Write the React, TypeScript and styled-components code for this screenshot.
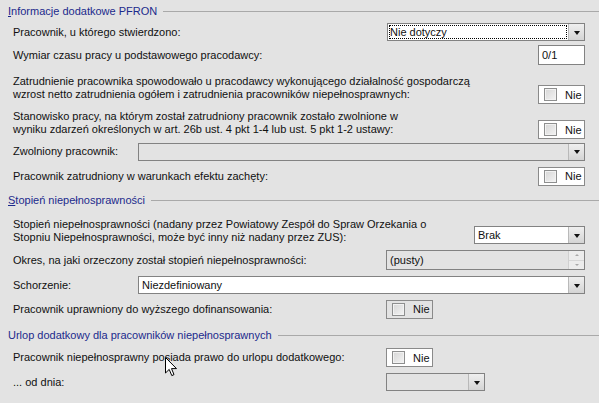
import styled, { createGlobalStyle, css } from "styled-components";

const GlobalStyle = createGlobalStyle`
  html, body {
    margin: 0;
    padding: 0;
    background: #e3e3e3;
  }
  body {
    font-family: "Liberation Sans", Arial, sans-serif;
    font-size: 11px;
    color: #101010;
  }
`;

const Panel = styled.div`
  position: relative;
  width: 599px;
  height: 403px;
  overflow: hidden;
  background: #e3e3e3;
`;

const GroupHeader = styled.div<{ $h: number }>`
  display: flex;
  align-items: center;
  height: ${(p) => p.$h}px;
  padding-left: 8px;
  color: #1c2a8c;

  &::after {
    content: "";
    flex: 1;
    margin-left: 6px;
    border-top: 1px solid #a9a9a9;
  }
`;

const Key = styled.span`
  text-decoration: underline;
`;

const GroupBody = styled.div`
  padding: 0 14px 0 13px;
`;

const Row = styled.div<{ $h: number; $bottom?: boolean }>`
  display: flex;
  align-items: ${(p) => (p.$bottom ? "flex-end" : "center")};
  height: ${(p) => p.$h}px;
`;

const Label = styled.div<{ $w?: number; $mb?: number }>`
  ${(p) => (p.$w ? css`width: ${p.$w}px; flex: none;` : css`flex: 1;`)}
  line-height: 13px;
  margin-bottom: ${(p) => p.$mb ?? 0}px;
  white-space: nowrap;
`;

const Box = styled.div<{ $w?: number; $h: number; $disabled?: boolean }>`
  display: flex;
  align-items: stretch;
  box-sizing: border-box;
  ${(p) => (p.$w ? css`width: ${p.$w}px; flex: none;` : css`flex: 1;`)}
  height: ${(p) => p.$h}px;
  border: 1px solid #828282;
  background: ${(p) => (p.$disabled ? "#e3e3e3" : "#ffffff")};
`;

const ComboText = styled.div<{ $focus?: boolean }>`
  flex: 1;
  display: flex;
  align-items: center;
  padding-left: 2px;
  margin: 1px;
  ${(p) =>
    p.$focus &&
    css`
      outline: 1px dotted #000;
      outline-offset: -1px;
      padding-left: 1px;
    `}
`;

const ArrowButton = styled.div`
  width: 15px;
  flex: none;
  display: flex;
  align-items: center;
  justify-content: center;
  border-left: 1px solid #b9b9b9;
  background: linear-gradient(#efefef, #d4d4d4);

  &::before {
    content: "";
    border-left: 3px solid transparent;
    border-right: 3px solid transparent;
    border-top: 4px solid #111;
    margin-top: 1px;
  }
`;

const InputText = styled.div`
  display: flex;
  align-items: center;
  padding-left: 3px;
`;

const SpinButtons = styled.div`
  width: 15px;
  flex: none;
  display: flex;
  flex-direction: column;
  border-left: 1px solid #d0d0d0;
`;

const SpinHalf = styled.div<{ $up?: boolean }>`
  flex: 1;
  display: flex;
  align-items: center;
  justify-content: center;
  background: #ececec;
  border-bottom: ${(p) => (p.$up ? "1px solid #d6d6d6" : "none")};

  &::before {
    content: "";
    border-left: 2px solid transparent;
    border-right: 2px solid transparent;
    ${(p) =>
      p.$up
        ? css`border-bottom: 2px solid #a8a8a8;`
        : css`border-top: 2px solid #a8a8a8;`}
  }
`;

const CheckWrap = styled.div<{ $disabled?: boolean }>`
  box-sizing: border-box;
  width: 47px;
  height: 19px;
  flex: none;
  display: flex;
  align-items: center;
  gap: 8px;
  padding-left: 5px;
  border: 1px solid #8a8a8a;
  background: ${(p) => (p.$disabled ? "#e3e3e3" : "#ffffff")};
`;

const CheckSquare = styled.div`
  box-sizing: border-box;
  width: 13px;
  height: 13px;
  border: 1px solid #8e8f8f;
  background: linear-gradient(135deg, #d6d6d6, #f4f4f4);
  box-shadow: inset 0 0 0 1px #f2f2f2;
`;

const Cursor = styled.svg`
  position: absolute;
  left: 165px;
  top: 357px;
`;

const Combo = ({ w, text, focus, disabled }: { w?: number; text?: string; focus?: boolean; disabled?: boolean }) => (
  <Box $w={w} $h={18} $disabled={disabled}>
    <ComboText $focus={focus}>{text}</ComboText>
    <ArrowButton />
  </Box>
);

const Check = ({ disabled }: { disabled?: boolean }) => (
  <CheckWrap $disabled={disabled}>
    <CheckSquare />
    <span>Nie</span>
  </CheckWrap>
);

export default function App() {
  return (
    <Panel>
      <GlobalStyle />

      <GroupHeader $h={22}>
        <span>
          <Key>I</Key>nformacje dodatkowe PFRON
        </span>
      </GroupHeader>
      <GroupBody>
        <Row $h={20}>
          <Label>Pracownik, u którego stwierdzono:</Label>
          <Combo w={198} text="Nie dotyczy" focus />
        </Row>
        <Row $h={26}>
          <Label>Wymiar czasu pracy u podstawowego pracodawcy:</Label>
          <Box $w={47} $h={20}>
            <InputText>0/1</InputText>
          </Box>
        </Row>
        <Row $h={36} $bottom>
          <Label $mb={3}>
            Zatrudnienie pracownika spowodowało u pracodawcy wykonującego działalność gospodarczą
            <br />
            wzrost netto zatrudnienia ogółem i zatrudnienia pracowników niepełnosprawnych:
          </Label>
          <Check />
        </Row>
        <Row $h={35} $bottom>
          <Label $mb={3}>
            Stanowisko pracy, na którym został zatrudniony pracownik zostało zwolnione w
            <br />
            wyniku zdarzeń określonych w art. 26b ust. 4 pkt 1-4 lub ust. 5 pkt 1-2 ustawy:
          </Label>
          <Check />
        </Row>
        <Row $h={25}>
          <Label $w={125}>Zwolniony pracownik:</Label>
          <Combo disabled />
        </Row>
        <Row $h={24}>
          <Label>Pracownik zatrudniony w warunkach efektu zachęty:</Label>
          <Check />
        </Row>
      </GroupBody>

      <GroupHeader $h={24}>
        <span>
          <Key>S</Key>topień niepełnosprawności
        </span>
      </GroupHeader>
      <GroupBody>
        <Row $h={32} $bottom>
          <Label>
            Stopień niepełnosprawności (nadany przez Powiatowy Zespół do Spraw Orzekania o
            <br />
            Stopniu Niepełnosprawności, może być inny niż nadany przez ZUS):
          </Label>
          <Combo w={111} text="Brak" />
        </Row>
        <Row $h={32}>
          <Label>Okres, na jaki orzeczony został stopień niepełnosprawności:</Label>
          <Box $w={199} $h={20} $disabled>
            <InputText style={{ flex: 1 }}>(pusty)</InputText>
            <SpinButtons>
              <SpinHalf $up />
              <SpinHalf />
            </SpinButtons>
          </Box>
        </Row>
        <Row $h={18}>
          <Label $w={125}>Schorzenie:</Label>
          <Combo text="Niezdefiniowany" />
        </Row>
        <Row $h={30}>
          <Label $w={373}>Pracownik uprawniony do wyższego dofinansowania:</Label>
          <Check disabled />
        </Row>
      </GroupBody>

      <GroupHeader $h={22}>
        <span>Urlop dodatkowy dla pracowników niepełnosprawnych</span>
      </GroupHeader>
      <GroupBody>
        <Row $h={23}>
          <Label $w={373}>Pracownik niepełnosprawny posiada prawo do urlopu dodatkowego:</Label>
          <Check />
        </Row>
        <Row $h={26}>
          <Label $w={373}>... od dnia:</Label>
          <Combo w={99} disabled />
        </Row>
      </GroupBody>

      <Cursor width="13" height="20" viewBox="0 0 13 20">
        <path
          d="M0.5 0.5 L0.5 16 L4.2 12.4 L6.8 18.6 L9 17.6 L6.5 11.6 L11.5 11.6 Z"
          fill="#fff"
          stroke="#000"
          strokeWidth="1"
          strokeLinejoin="miter"
        />
      </Cursor>
    </Panel>
  );
}
